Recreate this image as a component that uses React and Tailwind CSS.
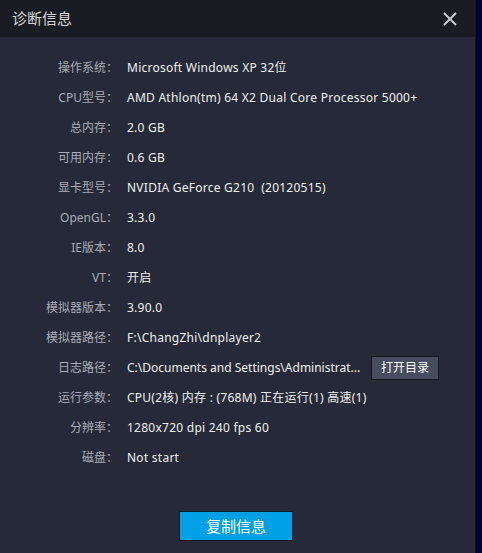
const rows = [
  ["操作系统", "Microsoft Windows XP 32位"],
  ["CPU型号", "AMD Athlon(tm) 64 X2 Dual Core Processor 5000+"],
  ["总内存", "2.0 GB"],
  ["可用内存", "0.6 GB"],
  ["显卡型号", "NVIDIA GeForce G210  (20120515)"],
  ["OpenGL", "3.3.0"],
  ["IE版本", "8.0"],
  ["VT", "开启"],
  ["模拟器版本", "3.90.0"],
  ["模拟器路径", "F:\\ChangZhi\\dnplayer2"],
  ["日志路径", "C:\\Documents and Settings\\Administrat...", true],
  ["运行参数", "CPU(2核) 内存 : (768M) 正在运行(1) 高速(1)"],
  ["分辨率", "1280x720 dpi 240 fps 60"],
  ["磁盘", "Not start"],
];

export default function App() {
  return (
    <div
      className="flex h-[553px] w-[482px] bg-[#02023a]"
      style={{ fontFamily: '"Noto Sans", "Noto Sans CJK SC", sans-serif' }}
    >
      <div className="flex w-[476px] flex-col border-r border-[#14161d] bg-[#262a38]">
        <div className="flex h-[37px] shrink-0 items-center justify-between bg-[#1a1c23] pl-3 pr-[18px]">
          <span className="text-[15px] text-[#d6d6d6]">诊断信息</span>
          <svg width="14" height="14" viewBox="0 0 14 14" className="text-[#cfcfcf]">
            <path d="M1 1L13 13M13 1L1 13" stroke="currentColor" strokeWidth="1.8" />
          </svg>
        </div>

        <div className="flex flex-col pt-4">
          {rows.map(([label, value, btn]) => (
            <div key={label} className="flex h-[30px] items-center text-[12px]">
              <span className="w-[118px] shrink-0 whitespace-pre text-right text-[#a9acb6]">
                {label}：
              </span>
              <span
                className={`ml-[9px] whitespace-pre text-[#efefef] ${
                  btn ? "tracking-normal" : "tracking-[0.25px]"
                }`}
              >
                {value}
              </span>
              {btn && (
                <button className="ml-auto mr-[36px] h-[24px] w-[68px] border border-[#15171e] bg-[#474c5e] text-[12px] text-white">
                  打开目录
                </button>
              )}
            </div>
          ))}
        </div>

        <div className="mt-auto flex justify-center pb-3 pr-[3px]">
          <button className="h-[30px] w-[114px] border border-[#0d1a2a] bg-[#00a0e6] text-[15px] text-white">
            复制信息
          </button>
        </div>
      </div>
    </div>
  );
}
